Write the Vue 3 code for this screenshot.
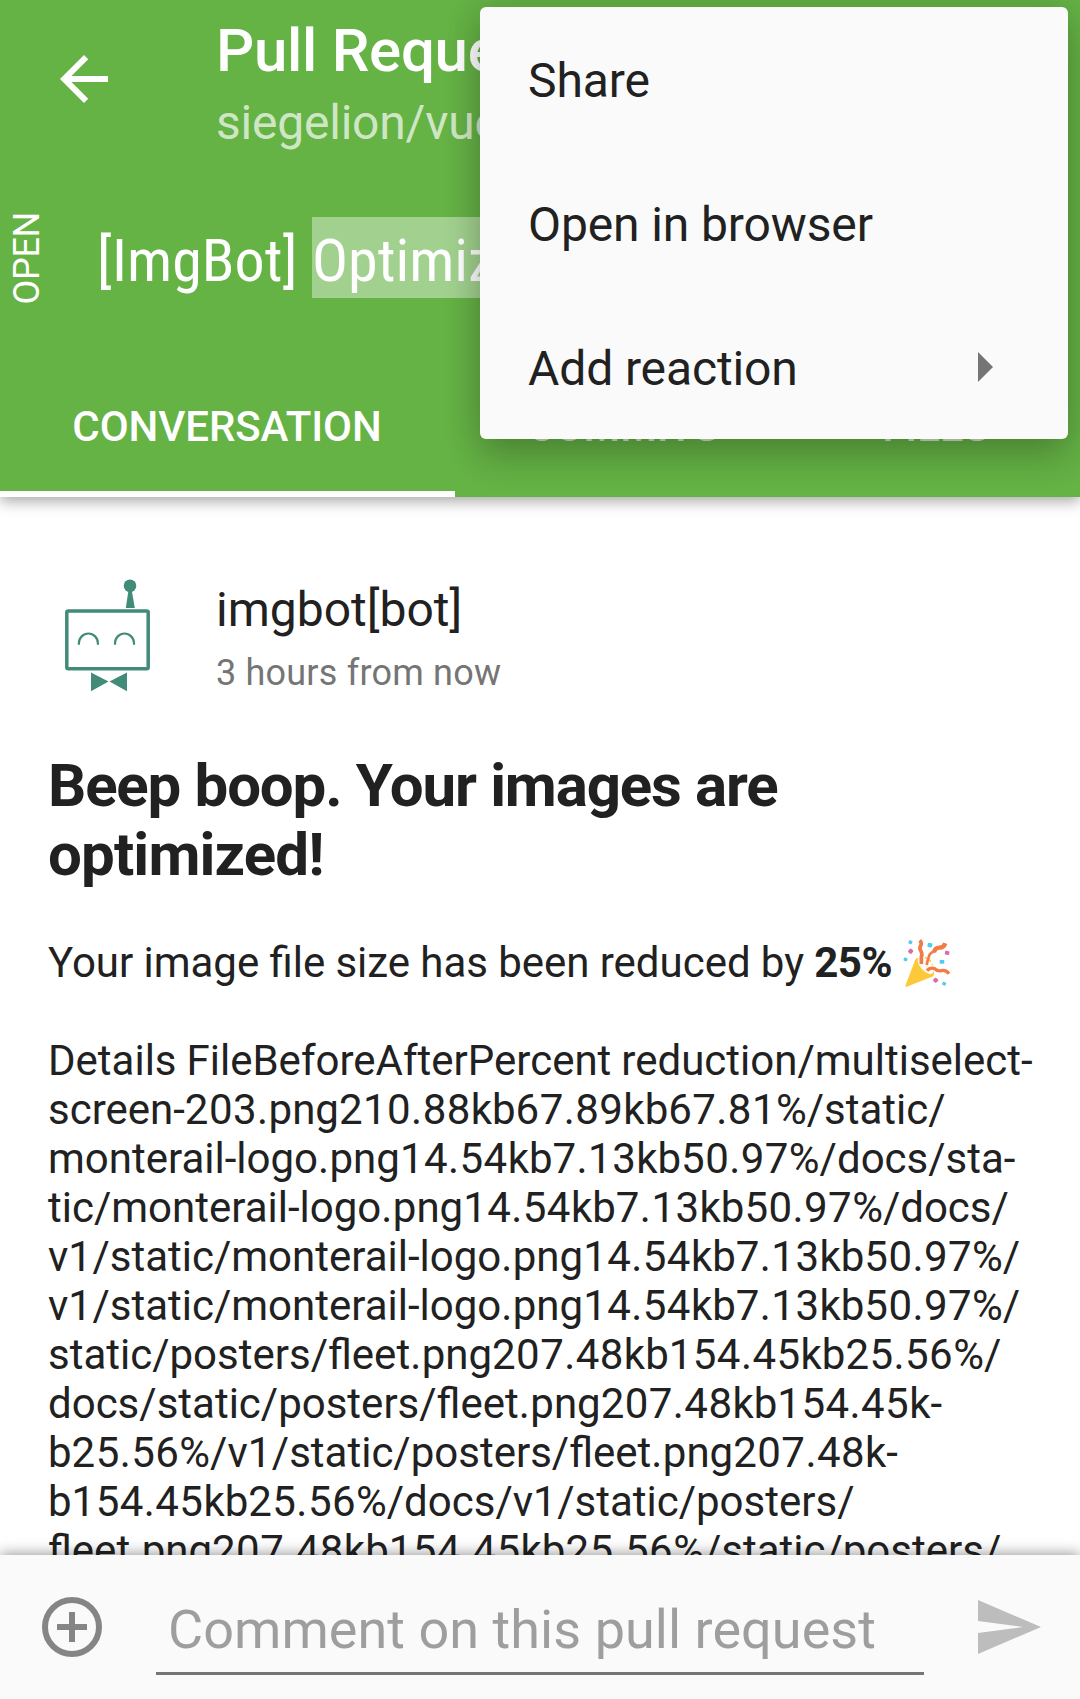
<script setup>
const menu = [
  { label: 'Share' },
  { label: 'Open in browser' },
  { label: 'Add reaction', submenu: true },
]
const tabs = ['CONVERSATION', 'COMMITS', 'FILES']
// Figures are split out of each line so that they can be spaced on their own.
const details = [
  'Details FileBeforeAfterPercent reduction/multiselect-',
  'screen-203.png210.88kb67.89kb67.81%/static/',
  'monterail-logo.png14.54kb7.13kb50.97%/docs/sta-',
  'tic/monterail-logo.png14.54kb7.13kb50.97%/docs/',
  'v1/static/monterail-logo.png14.54kb7.13kb50.97%/',
  'v1/static/monterail-logo.png14.54kb7.13kb50.97%/',
  'static/posters/fleet.png207.48kb154.45kb25.56%/',
  'docs/static/posters/fleet.png207.48kb154.45k-',
  'b25.56%/v1/static/posters/fleet.png207.48k-',
  'b154.45kb25.56%/docs/v1/static/posters/',
  'fleet.png207.48kb154.45kb25.56%/static/posters/',
].map((line) => line.split(/([\d.]+)/).filter(Boolean))
const isFigure = (part) => /^[\d.]+$/.test(part)
</script>

<template>
  <div class="screen">
    <header class="header">
      <div class="toolbar">
        <svg class="back" viewBox="0 0 24 24"><path fill="#fff" d="M20 11H7.83l5.59-5.59L12 4l-8 8 8 8 1.41-1.41L7.83 13H20z" /></svg>
        <div class="titles">
          <div class="title">Pull Request</div>
          <div class="repo">siegelion/vue</div>
        </div>
      </div>
      <div class="subject">
        <div class="state">OPEN</div>
        <div class="subject-text"><span class="prefix">[ImgBot] </span><span class="selected">Optimize</span></div>
      </div>
      <nav class="tabs">
        <div v-for="(tab, i) in tabs" :key="tab" class="tab" :class="'tab-' + i">{{ tab }}</div>
      </nav>
    </header>

    <main class="content">
      <div class="author">
        <svg class="avatar" viewBox="60 575 96 120" fill="none" stroke="#438b79">
          <circle cx="130" cy="585.7" r="6.3" fill="#438b79" stroke="none" />
          <path d="M128.5 590h3.2l3.1 18h-9z" fill="#438b79" stroke="none" />
          <rect x="66.8" y="611" width="81.4" height="57.8" rx="1.5" stroke-width="3.5" />
          <path d="M78.9 644.8v-1.5a9.5 9.8 0 0 1 19 0v1.5M115 644.8v-1.5a9.5 9.8 0 0 1 19 0v1.5" stroke-width="2.2" />
          <path d="M91 672.5v18.7l17.5-9.6zM127 672.5v18.7l-17.5-9.6z" fill="#438b79" stroke="none" />
        </svg>
        <div>
          <div class="name">imgbot[bot]</div>
          <div class="time">3 hours from now</div>
        </div>
      </div>
      <h1><span class="h-first">Beep boop. Your images are</span><br><span class="h-second">optimized!</span></h1>
      <p class="summary">
        <span>Your image file size has been reduced by <b>25%</b></span>
        <svg class="party" viewBox="69 51 147 150">
          <path fill="#fcc93a" d="M76 195l29-77q3-9 12-7 26 8 43 38 6 14-4 18l-76 30q-5 1-4-2z" />
          <ellipse cx="137" cy="134" rx="15" ry="31" transform="rotate(-44 137 134)" fill="#fffaf0" />
          <path d="M134 109q17 6 24 23" fill="none" stroke="#fcc93a" stroke-width="4" stroke-dasharray="9 6" />
          <g fill="none" stroke="#f27c48">
            <path stroke-width="11" d="M119 58q8 8 3 16t1 17q5 9 1 16v22" />
            <path stroke-width="13" d="M196 67q-5 14-18 13-13 0-16 14" />
            <path stroke-width="8" d="M164 90q-17 7-18 19-4 12-6 23" />
            <path stroke-width="10" d="M141 149q9-11 23-6 10 9 20 6 13-4 23 9" />
          </g>
          <g fill="#57c9ec">
            <rect x="86" y="58" width="11" height="11" rx="3" transform="rotate(25 91 63)" />
            <rect x="143" y="66" width="14" height="13" rx="3" transform="rotate(12 150 72)" />
            <rect x="71" y="110" width="11" height="10" rx="3" transform="rotate(20 76 115)" />
            <rect x="179" y="117" width="14" height="11" rx="2" />
            <rect x="187" y="183" width="11" height="10" rx="3" transform="rotate(20 192 188)" />
          </g>
          <g fill="#db6ba5">
            <rect x="86" y="84" width="13" height="13" rx="3" transform="rotate(40 92 90)" />
            <rect x="195" y="90" width="13" height="11" rx="2" transform="rotate(8 201 95)" />
            <rect x="161" y="171" width="13" height="13" rx="3" transform="rotate(45 167 177)" />
          </g>
        </svg>
      </p>
      <p class="details">
        <span v-for="(line, i) in details" :key="i" class="line"><span v-for="(part, j) in line" :key="j" :class="{ figure: isFigure(part) }">{{ part }}</span></span>
      </p>
    </main>

    <footer class="composer">
      <svg class="add" viewBox="0 0 60 60" fill="none" stroke="#858585" stroke-width="6">
        <circle cx="30" cy="30" r="27" />
        <path d="M15 30h30M30 15v30" />
      </svg>
      <div class="field">Comment on this pull request</div>
      <svg class="send" viewBox="0 0 24 24"><path fill="#bdbdbd" d="M2.01 21L23 12 2.01 3 2 10l15 2-15 2z" /></svg>
    </footer>

    <div class="menu">
      <div v-for="item in menu" :key="item.label" class="menu-item">
        <span>{{ item.label }}</span>
        <svg v-if="item.submenu" class="caret" viewBox="0 0 15 30"><path fill="#757575" d="M0 0l15 15L0 30z" /></svg>
      </div>
    </div>
  </div>
</template>

<style>
body { margin: 0; }
</style>

<style scoped>
.screen {
  position: relative;
  width: 1080px;
  height: 1699px;
  display: flex;
  flex-direction: column;
  overflow: hidden;
  background: #fff;
  color: #212121;
  font-family: Roboto, "Liberation Sans", sans-serif;
}
.header {
  flex: none;
  height: 497px;
  display: flex;
  flex-direction: column;
  background: #65b245;
  color: #fff;
  box-shadow: 0 4px 14px rgba(0, 0, 0, 0.36);
  z-index: 1;
}
.toolbar { display: flex; height: 168px; flex: none; white-space: nowrap; }
.back { width: 72px; height: 72px; margin: 43px 96px 0 48px; flex: none; }
.titles { padding-top: 16px; }
.title { font-size: 60px; line-height: 70px; font-weight: 500; letter-spacing: -0.3px; }
.repo { margin-top: 9px; font-size: 48px; line-height: 56px; letter-spacing: -0.22px; color: rgba(255, 255, 255, 0.7); }
.subject { flex: 1; display: flex; align-items: flex-start; }
.state {
  width: 42px;
  margin: 44px 0 0 6px;
  writing-mode: vertical-rl;
  transform: rotate(180deg);
  font-size: 36px;
  line-height: 42px;
  letter-spacing: -0.3px;
}
.subject-text {
  margin: 49px 0 0 49px;
  display: flex;
  height: 81px;
  font-size: 60px;
  line-height: 87px;
  font-stretch: 75%;
  white-space: pre;
}
.prefix { width: 215px; }
.selected { height: 81px; background: rgba(255, 255, 255, 0.4); }
.tabs { display: flex; height: 144px; flex: none; }
.tab {
  box-sizing: border-box;
  height: 144px;
  padding-right: 1px;
  font-size: 42px;
  line-height: 147px;
  font-weight: 500;
  letter-spacing: -0.08px;
  text-align: center;
  color: rgba(255, 255, 255, 0.7);
}
.tab-0 { width: 455px; color: #fff; border-bottom: 6px solid #fff; }
.tab-1 { width: 337px; }
.tab-2 { width: 288px; }

.content { flex: 1; min-height: 0; overflow: hidden; padding: 78px 48px 0; }
.author { display: flex; height: 120px; }
.avatar { width: 96px; height: 120px; margin: 0 60px 0 12px; }
.name { margin-top: 7px; font-size: 48px; line-height: 56px; }
.time { margin-top: 14px; font-size: 36px; line-height: 42px; letter-spacing: 0.2px; color: #757575; }
h1 { margin: 56px 0 0; font-size: 60px; line-height: 69px; font-weight: 700; white-space: nowrap; }
.h-first { letter-spacing: -1.16px; word-spacing: 0.6px; }
.h-second { letter-spacing: -0.85px; }
p { margin: 0; font-size: 42px; line-height: 49px; white-space: nowrap; }
.summary { display: flex; margin-top: 49px; height: 49px; word-spacing: -0.2px; }
.summary b { letter-spacing: -0.5px; }
.party { width: 49px; height: 50px; margin-left: 11px; }
.details { margin-top: 49px; }
.line { display: block; height: 49px; white-space: pre; word-spacing: -0.4px; }
.figure { letter-spacing: 0.45px; }

.composer {
  flex: none;
  display: flex;
  height: 144px;
  background: #fafafa;
  box-shadow: 0 0 14px rgba(0, 0, 0, 0.48);
  z-index: 1;
}
.add { width: 60px; height: 60px; margin: 42px 54px 0 42px; flex: none; }
.field {
  box-sizing: border-box;
  width: 768px;
  height: 120px;
  padding: 43px 0 0 12px;
  border-bottom: 3px solid #757575;
  font-size: 54px;
  line-height: 63px;
  white-space: nowrap;
  letter-spacing: 0.04px;
  color: #9e9e9e;
}
.send { width: 72px; height: 72px; margin: 36px 0 0 48px; }

.menu {
  position: absolute;
  z-index: 2;
  left: 480px;
  top: 7px;
  width: 588.4px;
  height: 432.4px;
  border-radius: 6px;
  background: #fafafa;
  box-shadow: 0 18px 36px rgba(0, 0, 0, 0.2), 0 0 36px rgba(0, 0, 0, 0.12);
}
.menu-item {
  box-sizing: border-box;
  display: flex;
  justify-content: space-between;
  height: 144px;
  padding: 0 75.4px 0 48px;
  font-size: 48px;
  line-height: 147px;
  letter-spacing: -0.12px;
}
.caret { width: 15px; height: 30px; margin-top: 57px; }
</style>
